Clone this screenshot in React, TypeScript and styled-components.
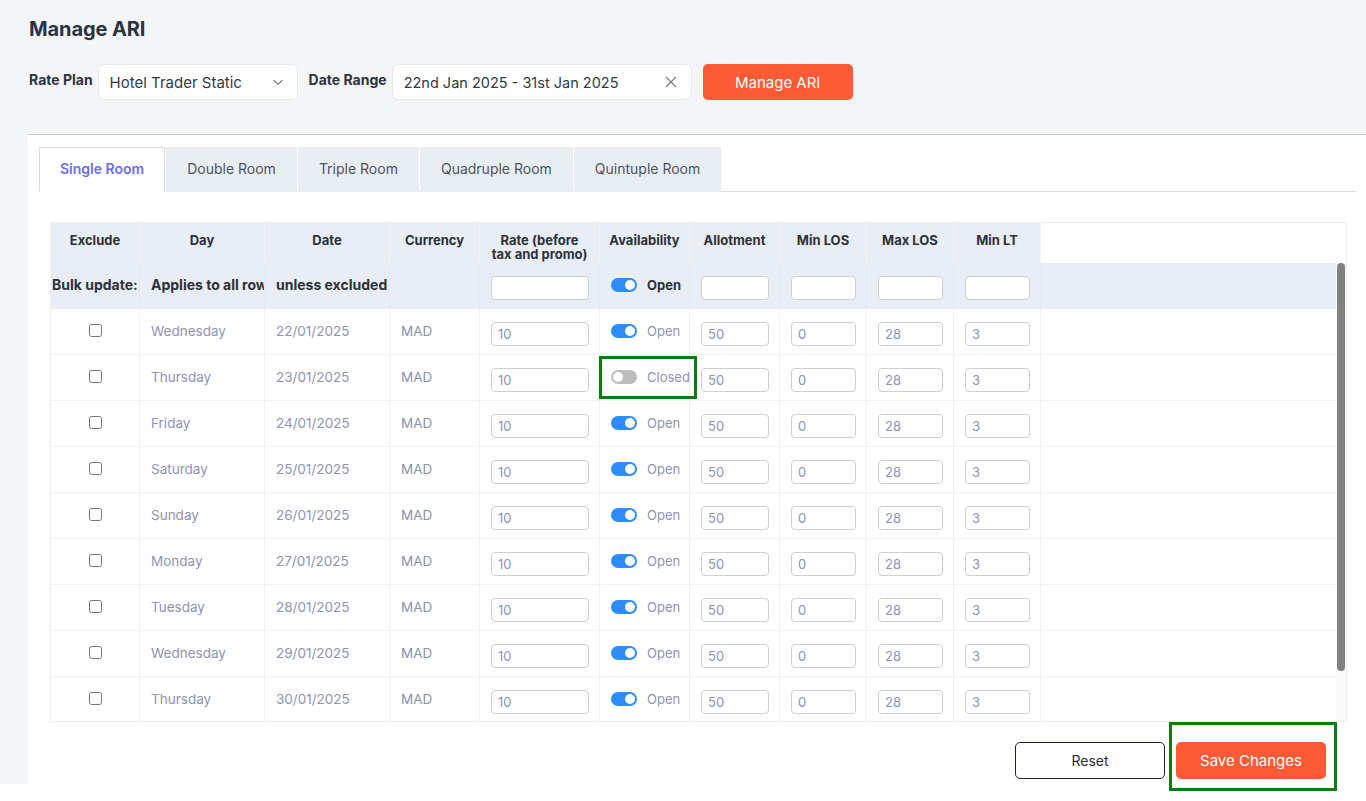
import React, { useState } from 'react';
import styled, { createGlobalStyle } from 'styled-components';

const GlobalStyle = createGlobalStyle`
  html, body {
    margin: 0;
    padding: 0;
    background: #fff;
  }
  body {
    font-family: Inter, "Open Sans", Arial, sans-serif;
    color: #333;
  }
  * { box-sizing: border-box; }
`;

type Row = { day: string; date: string; open: boolean };

const rows: Row[] = [
  { day: 'Wednesday', date: '22/01/2025', open: true },
  { day: 'Thursday', date: '23/01/2025', open: false },
  { day: 'Friday', date: '24/01/2025', open: true },
  { day: 'Saturday', date: '25/01/2025', open: true },
  { day: 'Sunday', date: '26/01/2025', open: true },
  { day: 'Monday', date: '27/01/2025', open: true },
  { day: 'Tuesday', date: '28/01/2025', open: true },
  { day: 'Wednesday', date: '29/01/2025', open: true },
  { day: 'Thursday', date: '30/01/2025', open: true },
  { day: 'Friday', date: '31/01/2025', open: true },
];

const tabs = ['Single Room', 'Double Room', 'Triple Room', 'Quadruple Room', 'Quintuple Room'];

const COLS = '89px 125px 125px 90px 120px 90px 90px 87px 87px 87px 1fr';

export default function App() {
  const [active, setActive] = useState(0);
  const [data, setData] = useState(rows);

  const toggle = (i: number) =>
    setData(d => d.map((r, j) => (j === i ? { ...r, open: !r.open } : r)));

  return (
    <>
      <GlobalStyle />
      <Page>
        <Title>Manage ARI</Title>
        <FilterBar>
          <Field>
            <Label>Rate Plan</Label>
            <SelectBox>
              <span>Hotel Trader Static</span>
              <svg width="14" height="14" viewBox="0 0 14 14" fill="none">
                <path d="M2.5 5l4.5 4.5L11.5 5" stroke="#7a7a7a" strokeWidth="1.1" />
              </svg>
            </SelectBox>
          </Field>
          <Field>
            <Label>Date Range</Label>
            <DateBox>
              <span>22nd Jan 2025 - 31st Jan 2025</span>
              <svg width="14" height="14" viewBox="0 0 14 14" fill="none">
                <path d="M2 2l10 10M12 2L2 12" stroke="#7a7a7a" strokeWidth="1.1" />
              </svg>
            </DateBox>
          </Field>
          <PrimaryButton>Manage ARI</PrimaryButton>
        </FilterBar>

        <Panel>
          <TabBar>
            {tabs.map((t, i) => (
              <Tab key={t} $active={i === active} onClick={() => setActive(i)}>
                {t}
              </Tab>
            ))}
          </TabBar>

          <TableWrap>
            <HeadRow>
              <HeadCell>Exclude</HeadCell>
              <HeadCell>Day</HeadCell>
              <HeadCell>Date</HeadCell>
              <HeadCell>Currency</HeadCell>
              <HeadCell>Rate (before<br />tax and promo)</HeadCell>
              <HeadCell>Availability</HeadCell>
              <HeadCell>Allotment</HeadCell>
              <HeadCell>Min LOS</HeadCell>
              <HeadCell>Max LOS</HeadCell>
              <HeadCell>Min LT</HeadCell>
              <HeadFiller />
            </HeadRow>

            <BodyFrame>
              <Scroller>
                <BodyRow $bulk>
                  <BulkLabel $flush>Bulk update:</BulkLabel>
                  <BulkLabel>Applies to all rows</BulkLabel>
                  <BulkLabel>unless excluded</BulkLabel>
                  <TextCell />
                  <InputCell><CellInput /></InputCell>
                  <ToggleCell>
                    <Switch $on />
                    <SwitchLabel $bold>Open</SwitchLabel>
                  </ToggleCell>
                  <InputCell><CellInput /></InputCell>
                  <InputCell><CellInput /></InputCell>
                  <InputCell><CellInput /></InputCell>
                  <InputCell><CellInput /></InputCell>
                  <Filler />
                </BodyRow>

                {data.map((r, i) => (
                  <BodyRow key={r.date}>
                    <CheckCell><input type="checkbox" /></CheckCell>
                    <TextCell>{r.day}</TextCell>
                    <TextCell>{r.date}</TextCell>
                    <TextCell $gray>MAD</TextCell>
                    <InputCell><CellInput defaultValue="10" /></InputCell>
                    <ToggleCell onClick={() => toggle(i)}>
                      <Switch $on={r.open} />
                      <SwitchLabel>{r.open ? 'Open' : 'Closed'}</SwitchLabel>
                      {i === 1 && <Highlight />}
                    </ToggleCell>
                    <InputCell><CellInput defaultValue="50" /></InputCell>
                    <InputCell><CellInput defaultValue="0" /></InputCell>
                    <InputCell><CellInput defaultValue="28" /></InputCell>
                    <InputCell><CellInput defaultValue="3" /></InputCell>
                    <Filler />
                  </BodyRow>
                ))}
              </Scroller>
              <ScrollTrack>
                <ScrollThumb />
              </ScrollTrack>
            </BodyFrame>
          </TableWrap>

          <Footer>
            <OutlineButton>Reset</OutlineButton>
            <SaveWrap>
              <SaveButton>Save Changes</SaveButton>
              <SaveHighlight />
            </SaveWrap>
          </Footer>
        </Panel>
      </Page>
    </>
  );
}

// grey page background stops at 784px, below it the page is white
const Page = styled.div`
  min-height: 801px;
  background: linear-gradient(#f4f5f7, #f4f5f7) no-repeat 0 0 / 100% 784px, #fff;
  padding-left: 28px;
`;

const Title = styled.h1`
  margin: 0;
  padding: 17px 0 0 1px;
  font-size: 20px;
  line-height: 24px;
  font-weight: 700;
  color: #2b3242;
  letter-spacing: -0.1px;
`;

const FilterBar = styled.div`
  display: flex;
  align-items: center;
  gap: 11px;
  margin-top: 23px;
  padding-left: 1px;
  height: 36px;
`;

const Field = styled.div`
  display: flex;
  align-items: center;
  gap: 5px;
`;

const Label = styled.label`
  font-size: 14px;
  font-weight: 700;
  color: #2f3440;
  padding-bottom: 6px;
`;

const InputBox = styled.div`
  height: 36px;
  background: #fff;
  border: 1px solid #e4e7eb;
  border-radius: 6px;
  display: flex;
  align-items: center;
  justify-content: space-between;
  padding: 0 12px 0 11px;
  font-size: 14.5px;
  color: #333a45;
`;

const SelectBox = styled(InputBox)`
  width: 200px;
  font-size: 15px;
`;

const DateBox = styled(InputBox)`
  width: 300px;
  padding-right: 13px;
`;

const PrimaryButton = styled.button`
  width: 150px;
  height: 36px;
  border: none;
  border-radius: 5px;
  background: #ff5a36;
  color: #fff;
  font-family: inherit;
  font-size: 15px;
  cursor: pointer;
`;

const SaveButton = styled(PrimaryButton)`
  height: 37px;
`;

const Panel = styled.div`
  margin-top: 34px;
  min-height: 667px;
  background: #fff;
  border-top: 1px solid #c6d0df;
  padding: 12px 10px 0 11px;
`;

const TabBar = styled.div`
  display: flex;
  gap: 1px;
  height: 45px;
  border-bottom: 1px solid #dcdcdc;
`;

const Tab = styled.button<{ $active?: boolean }>`
  height: 45px;
  padding: 0 20px 3px;
  border: 1px solid ${({ $active }) => ($active ? '#dcdcdc' : 'transparent')};
  border-bottom: ${({ $active }) => ($active ? '1px solid #fff' : 'none')};
  margin-bottom: -1px;
  background: ${({ $active }) => ($active ? '#fff' : '#e9eef5')};
  color: ${({ $active }) => ($active ? '#6c6cf2' : '#4f5360')};
  font-family: inherit;
  font-size: 14px;
  font-weight: ${({ $active }) => ($active ? 600 : 400)};
  cursor: pointer;
`;

const TableWrap = styled.div`
  margin: 30px 9px 0 11px;
  border: 1px solid #eeeeee;
  background: #fff;
`;

const HeadRow = styled.div`
  display: grid;
  grid-template-columns: ${COLS};
  height: 40px;
`;

const HeadCell = styled.div`
  background: #e9eef6;
  border-right: 1px solid #f2f4f8;
  font-size: 13px;
  font-weight: 700;
  color: #2d313a;
  text-align: center;
  line-height: 14px;
  padding-top: 10px;
`;

const HeadFiller = styled.div`
  background: #fff;
`;

const BodyFrame = styled.div`
  position: relative;
  height: 458px;
`;

const Scroller = styled.div`
  height: 100%;
  overflow-y: auto;
  padding-right: 10px;
  scrollbar-width: none;
  &::-webkit-scrollbar {
    display: none;
  }
`;

const ScrollTrack = styled.div`
  position: absolute;
  top: 0;
  right: 0;
  bottom: 0;
  width: 10px;
  background: #fafafa;
  pointer-events: none;
`;

const ScrollThumb = styled.div`
  margin: 0 auto;
  width: 8px;
  height: 408px;
  border-radius: 4px;
  background: #808080;
`;

const BodyRow = styled.div<{ $bulk?: boolean }>`
  display: grid;
  grid-template-columns: ${COLS};
  height: 46px;
  background: ${({ $bulk }) => ($bulk ? '#e9eef6' : '#fff')};
  border-bottom: 1px solid ${({ $bulk }) => ($bulk ? '#e9eef6' : '#f0f0f0')};
  & > * {
    border-right: 1px solid ${({ $bulk }) => ($bulk ? '#e4e9f1' : '#f0f0f0')};
  }
  & > *:last-child {
    border-right: none;
  }
`;

const CellBase = styled.div`
  position: relative;
  display: flex;
  align-items: center;
  min-width: 0;
`;

const TextCell = styled(CellBase)<{ $gray?: boolean }>`
  padding: 0 0 2px 11px;
  font-size: 13.5px;
  color: ${({ $gray }) => ($gray ? '#8b92a6' : '#8d94b4')};
  white-space: nowrap;
  overflow: hidden;
`;

const BulkLabel = styled(CellBase)<{ $flush?: boolean }>`
  padding: 0 0 2px ${({ $flush }) => ($flush ? '1px' : '11px')};
  font-size: 14px;
  font-weight: 700;
  color: #2d313a;
  white-space: nowrap;
  overflow: hidden;
`;

const CheckCell = styled(CellBase)`
  justify-content: center;
  padding-bottom: 2px;
  input {
    margin: 0;
    width: 13px;
    height: 13px;
  }
`;

const InputCell = styled(CellBase)`
  padding: 4px 10px 0 11px;
`;

const CellInput = styled.input`
  width: 100%;
  height: 24px;
  border: 1px solid #cfcfcf;
  border-radius: 4px;
  padding: 1px 6px 0;
  font-family: inherit;
  font-size: 13px;
  color: #8a94b8;
  background: #fff;
  outline: none;
`;

const ToggleCell = styled(CellBase)`
  padding: 0 0 2px 11px;
  gap: 10px;
  cursor: pointer;
`;

const Switch = styled.span<{ $on?: boolean }>`
  position: relative;
  width: 26px;
  height: 14px;
  border-radius: 7px;
  background: ${({ $on }) => ($on ? '#2f8cfb' : '#bdbdbd')};
  flex-shrink: 0;
  &::after {
    content: '';
    position: absolute;
    top: 2px;
    left: ${({ $on }) => ($on ? '14px' : '2px')};
    width: 10px;
    height: 10px;
    border-radius: 50%;
    background: #fff;
  }
`;

const SwitchLabel = styled.span<{ $bold?: boolean }>`
  font-size: 13px;
  font-weight: ${({ $bold }) => ($bold ? 700 : 400)};
  color: ${({ $bold }) => ($bold ? '#2d313a' : '#8d94b4')};
`;

const Highlight = styled.span`
  position: absolute;
  left: -1px;
  top: 1px;
  width: 98px;
  height: 43px;
  border: 3px solid #0a7d0a;
  z-index: 2;
  pointer-events: none;
`;

const Filler = styled.div``;

const Footer = styled.div`
  display: flex;
  justify-content: flex-end;
  gap: 11px;
  margin: 20px 30px 0 0;
  padding-bottom: 5px;
`;

const OutlineButton = styled.button`
  width: 150px;
  height: 37px;
  border: 1px solid #1e2330;
  border-radius: 5px;
  background: #fff;
  color: #2b2f38;
  font-family: inherit;
  font-size: 14px;
  cursor: pointer;
`;

const SaveWrap = styled.div`
  position: relative;
`;

const SaveHighlight = styled.span`
  position: absolute;
  left: -7px;
  right: -11px;
  top: -20px;
  bottom: -12px;
  border: 3px solid #0a7d0a;
  pointer-events: none;
`;
